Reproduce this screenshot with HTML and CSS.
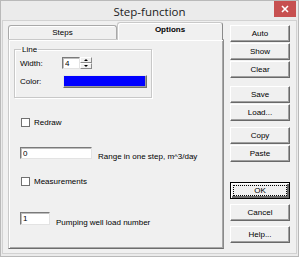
FILE: index.html
```html
<!DOCTYPE html>
<html lang="en">
<head>
    <meta charset="UTF-8">
    <title>Step-function</title>
    <link rel="stylesheet" href="styles.css">
</head>
<body>

<div class="window">
    <div class="titlebar">
        <span></span>
        <span class="title">Step-function</span>
        <span class="close">
            <svg width="8" height="8" viewBox="0 0 8 8"><path d="M1 1 L7 7 M7 1 L1 7" stroke="#fff" stroke-width="1.6"/></svg>
        </span>
    </div>

    <div class="client">
        <div class="tabs">
            <div class="tab-row">
                <div class="tab">Steps</div>
                <div class="tab active">Options</div>
            </div>
            <div class="panel">
                <fieldset class="group">
                    <legend>Line</legend>
                    <div class="row">
                        <span class="caption">Width:</span>
                        <div class="spin">
                            <input class="edit spin-edit" type="text" value="4">
                            <div class="spin-btns">
                                <span class="up"></span>
                                <span class="down"></span>
                            </div>
                        </div>
                    </div>
                    <div class="row color-row">
                        <span class="caption">Color:</span>
                        <div class="swatch"></div>
                    </div>
                </fieldset>

                <label class="check redraw"><span class="box"></span>Redraw</label>

                <div class="field range">
                    <input class="edit wide" type="text" value="0">
                    <span>Range in one step, m^3/day</span>
                </div>

                <label class="check measure"><span class="box"></span>Measurements</label>

                <div class="field pump">
                    <input class="edit narrow" type="text" value="1">
                    <span>Pumping well load number</span>
                </div>
            </div>
        </div>

        <div class="buttons">
            <button>Auto</button>
            <button>Show</button>
            <button>Clear</button>
            <button class="sep">Save</button>
            <button>Load...</button>
            <button class="sep-s">Copy</button>
            <button>Paste</button>
            <button class="default">OK</button>
            <button class="spaced">Cancel</button>
            <button class="spaced">Help...</button>
        </div>
    </div>
</div>

</body>
</html>
```

FILE: styles.css
```css
body {
    margin: 0;
    font-family: 'Liberation Sans', Arial, sans-serif;
    font-size: 8px;
    color: #000;
    background: #fff;
}
.window {
    width: 299px;
    height: 257px;
    box-sizing: border-box;
    border: 1px solid #b9b9b9;
    background: #ebebeb;
    display: flex;
    flex-direction: column;
}
.titlebar {
    height: 19px;
    display: grid;
    grid-template-columns: 1fr auto 1fr;
    align-items: center;
}
.title {
    font-family: 'Open Sans', 'Noto Sans', sans-serif;
    font-size: 11.5px;
    color: #222;
    padding-top: 1px;
}
.close {
    justify-self: end;
    align-self: start;
    width: 22px;
    height: 16px;
    margin-right: 2px;
    background: #c75050;
    display: flex;
    align-items: center;
    justify-content: center;
}
.client {
    flex: 1;
    margin: 0 1px 2px 1px;
    border: 1px solid #d2d2d2;
    background: #f0f0f0;
    display: flex;
    padding: 0 5px 0 5px;
    gap: 6px;
}
.tabs {
    width: 216px;
    display: flex;
    flex-direction: column;
    padding-top: 1px;
}
.tab-row {
    display: flex;
    align-items: flex-end;
    height: 17px;
}
.tab {
    box-sizing: border-box;
    width: 109px;
    height: 14px;
    border: 1px solid #a9a9a9;
    border-bottom: none;
    border-radius: 3px 3px 0 0;
    box-shadow: inset 1px 1px #fff;
    text-align: center;
    line-height: 13px;
    margin-bottom: 0;
}
.tab.active {
    width: 106px;
    height: 18px;
    margin-bottom: -1px;
    font-weight: bold;
    background: #f0f0f0;
    border-color: #c9c9c9 #8a8a8a #c9c9c9 #c9c9c9;
    position: relative;
    line-height: 14px;
}
.panel {
    box-sizing: border-box;
    height: 210px;
    border: 1px solid;
    border-color: #c9c9c9 #8a8a8a #6d6d6d #c9c9c9;
    box-shadow: inset 1px 1px #fff, inset -1px -1px #a8a8a8;
    padding: 0 0 0 5px;
}
.group {
    width: 138px;
    box-sizing: border-box;
    margin: 5px 0 0 0;
    padding: 3px 0 9px 5px;
    border: 1px solid #c8c8c8;
    box-shadow: 1px 1px #fff, inset 1px 1px #fff;
}
.group legend {
    padding: 0 1px;
    margin-left: 1px;
    line-height: 9px;
}
.row {
    display: flex;
    align-items: center;
}
.caption {
    width: 42px;
}
.color-row {
    margin-top: 6px;
}
.spin {
    display: flex;
}
.edit {
    box-sizing: border-box;
    height: 12px;
    border: 1px solid;
    border-color: #7a7a7a #e3e3e3 #e3e3e3 #7a7a7a;
    box-shadow: inset 1px 1px #bdbdbd;
    background: #fff;
    font-family: 'Liberation Sans', Arial, sans-serif;
    font-size: 8px;
    padding: 0 0 0 2px;
    margin: 0;
    outline: none;
}
.spin-edit {
    width: 18px;
}
.spin-btns {
    display: flex;
    flex-direction: column;
    width: 12px;
    height: 12px;
}
.spin-btns span {
    flex: 1;
    box-sizing: border-box;
    border: 1px solid;
    border-color: #fff #8a8a8a #8a8a8a #fff;
    background: #f0f0f0;
    position: relative;
}
.spin-btns span::after {
    content: "";
    position: absolute;
    left: 3px;
    top: 1px;
    border-left: 2px solid transparent;
    border-right: 2px solid transparent;
}
.spin-btns .up::after {
    border-bottom: 2px solid #000;
}
.spin-btns .down::after {
    border-top: 2px solid #000;
}
.swatch {
    box-sizing: border-box;
    width: 84px;
    height: 13px;
    margin-left: 1px;
    background: #0000ff;
    border: 1px solid;
    border-color: #e8e8e8 #6f6f6f #6f6f6f #e8e8e8;
    box-shadow: inset -1px -1px #9a9a9a;
}
.check {
    display: flex;
    align-items: center;
    height: 9px;
    margin-left: 7px;
}
.check .box {
    box-sizing: border-box;
    width: 9px;
    height: 9px;
    border: 1px solid #707070;
    background: #fff;
    margin-right: 4px;
}
.redraw {
    margin-top: 20px;
}
.measure {
    margin-top: 18px;
}
.field {
    display: flex;
    align-items: flex-end;
    margin-left: 6px;
    gap: 6px;
}
.field span {
    margin-bottom: -2px;
}
.range {
    margin-top: 20px;
}
.pump {
    margin-top: 26px;
}
.wide {
    width: 72px;
}
.narrow {
    width: 30px;
    height: 13px;
}
.buttons {
    display: flex;
    flex-direction: column;
    width: 60px;
    padding-top: 4px;
}
button {
    box-sizing: border-box;
    height: 17px;
    margin: 0 0 1px 0;
    padding: 0;
    border: 1px solid;
    border-color: #fff #696969 #696969 #fff;
    box-shadow: inset -1px -1px #a0a0a0;
    background: #f0f0f0;
    font-family: 'Liberation Sans', Arial, sans-serif;
    font-size: 8px;
    color: #000;
}
button.sep {
    margin-top: 7px;
}
button.sep-s {
    margin-top: 5px;
}
button.default {
    margin-top: 19px;
    border-color: #000;
    box-shadow: inset 1px 1px #fff, inset -2px -2px #696969;
    outline: 1px dotted #000;
    outline-offset: -4px;
}
button.spaced {
    margin-top: 4px;
}
```
